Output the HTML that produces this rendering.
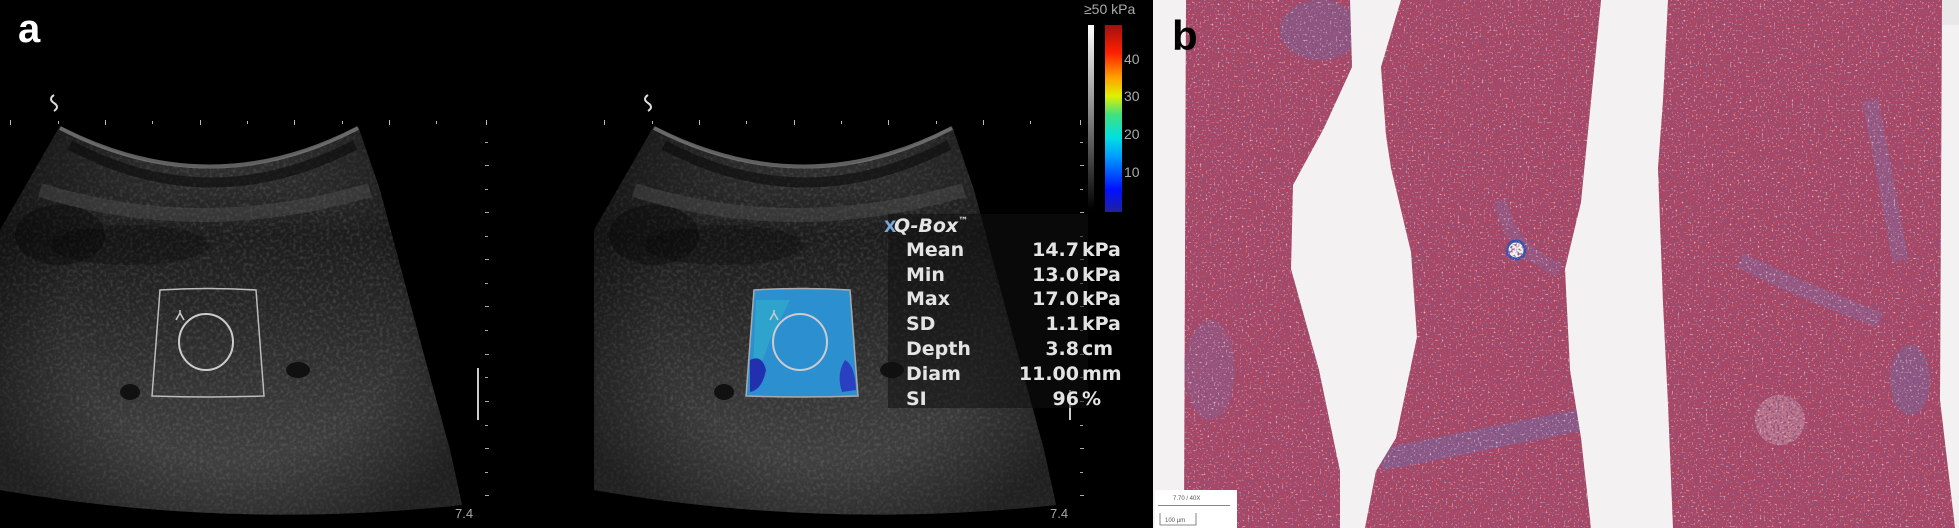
<!DOCTYPE html>
<html><head><meta charset="utf-8"><style>
html,body{margin:0;padding:0;width:1959px;height:528px;overflow:hidden;background:#000}
svg{display:block}
</style></head><body>
<svg width="1959" height="528" viewBox="0 0 1959 528" xmlns="http://www.w3.org/2000/svg">
<defs>
<filter id="noise" x="0" y="0" width="100%" height="100%">
<feTurbulence type="fractalNoise" baseFrequency="0.3" numOctaves="2" seed="5"/>
<feColorMatrix type="matrix" values="0 0 0 0 1  0 0 0 0 1  0 0 0 0 1  0 0 0 1.4 -0.6"/>
</filter>
<filter id="nuclei" x="0" y="0" width="100%" height="100%">
<feTurbulence type="fractalNoise" baseFrequency="0.45" numOctaves="1" seed="9"/>
<feColorMatrix type="matrix" values="0 0 0 0 0.25  0 0 0 0 0.08  0 0 0 0 0.2  0 0 0 4 -1.9"/>
</filter>
<filter id="whites" x="0" y="0" width="100%" height="100%">
<feTurbulence type="fractalNoise" baseFrequency="0.5" numOctaves="1" seed="21"/>
<feColorMatrix type="matrix" values="0 0 0 0 1  0 0 0 0 0.92  0 0 0 0 0.95  0 0 0 4 -2.3"/>
</filter>
<linearGradient id="fanG" x1="0" y1="0" x2="0" y2="1">
<stop offset="0" stop-color="#3a3a3a"/>
<stop offset="0.15" stop-color="#2c2c2c"/>
<stop offset="0.28" stop-color="#1c1c1c"/>
<stop offset="0.45" stop-color="#262626"/>
<stop offset="0.75" stop-color="#3a3a3a"/>
<stop offset="1" stop-color="#444"/>
</linearGradient>
<linearGradient id="cbar" x1="0" y1="1" x2="0" y2="0">
<stop offset="0" stop-color="#2020a0"/>
<stop offset="0.12" stop-color="#0010ff"/>
<stop offset="0.3" stop-color="#00a0ff"/>
<stop offset="0.4" stop-color="#00e0e0"/>
<stop offset="0.52" stop-color="#40e080"/>
<stop offset="0.62" stop-color="#e0f000"/>
<stop offset="0.72" stop-color="#ffa000"/>
<stop offset="0.85" stop-color="#ff2000"/>
<stop offset="1" stop-color="#a01010"/>
</linearGradient>
<linearGradient id="gbar" x1="0" y1="1" x2="0" y2="0">
<stop offset="0" stop-color="#000"/><stop offset="1" stop-color="#fff"/>
</linearGradient>
<radialGradient id="vig" cx="0.5" cy="0.5" r="0.6">
<stop offset="0.6" stop-color="#000" stop-opacity="0"/><stop offset="1" stop-color="#000" stop-opacity="0.5"/>
</radialGradient>
<clipPath id="fanClip"><path d="M60,126 Q210,210 358,126 L380,190 L420,340 L450,450 L462,505 Q230,530 0,490 L0,230 Z"/></clipPath>
<g id="fan">
<path d="M60,126 Q210,210 358,126 L380,190 L420,340 L450,450 L462,505 Q230,530 0,490 L0,230 Z" fill="url(#fanG)"/>
<g clip-path="url(#fanClip)"><rect x="0" y="120" width="470" height="410" filter="url(#noise)" opacity="0.22"/></g>
<path d="M60,126 Q210,210 358,126 L380,190 L420,340 L450,450 L462,505 Q230,530 0,490 L0,230 Z" fill="url(#vig)"/>
<path d="M60,128 Q210,205 358,128" stroke="#888" stroke-width="4" fill="none" opacity="0.7"/>
<path d="M70,145 Q210,220 355,145" stroke="#0a0a0a" stroke-width="10" fill="none" opacity="0.6"/>
<path d="M40,190 Q200,240 370,190" stroke="#666" stroke-width="14" fill="none" opacity="0.3"/>
<ellipse cx="60" cy="235" rx="45" ry="30" fill="#000" opacity="0.3"/>
<ellipse cx="130" cy="245" rx="80" ry="20" fill="#000" opacity="0.25"/>
<ellipse cx="130" cy="392" rx="10" ry="8" fill="#111"/>
<ellipse cx="298" cy="370" rx="12" ry="8" fill="#111"/>
<path d="M54,95 q-6,4 0,8 q6,4 0,8" stroke="#ddd" stroke-width="2" fill="none"/>
</g>
</defs>

<rect x="0" y="0" width="1155" height="528" fill="#000"/>
<use href="#fan"/>
<use href="#fan" x="594"/>
<g fill="#bbb">
<rect x="10" y="120" width="1" height="5"/><rect x="58" y="121" width="1" height="3"/><rect x="105" y="120" width="1" height="5"/><rect x="152" y="121" width="1" height="3"/><rect x="200" y="120" width="1" height="5"/><rect x="247" y="121" width="1" height="3"/><rect x="294" y="120" width="1" height="5"/><rect x="342" y="121" width="1" height="3"/><rect x="389" y="120" width="1" height="5"/><rect x="436" y="121" width="1" height="3"/><rect x="486" y="120" width="1" height="5"/>
<rect x="604" y="120" width="1" height="5"/><rect x="652" y="121" width="1" height="3"/><rect x="699" y="120" width="1" height="5"/><rect x="746" y="121" width="1" height="3"/><rect x="794" y="120" width="1" height="5"/><rect x="841" y="121" width="1" height="3"/><rect x="888" y="120" width="1" height="5"/><rect x="936" y="121" width="1" height="3"/><rect x="983" y="120" width="1" height="5"/><rect x="1030" y="121" width="1" height="3"/><rect x="1080" y="120" width="1" height="5"/>
</g>
<g fill="#aaa">
<rect x="485" y="142" width="3" height="1"/><rect x="485" y="165" width="4" height="1"/><rect x="485" y="189" width="3" height="1"/><rect x="485" y="212" width="4" height="1"/><rect x="485" y="236" width="3" height="1"/><rect x="485" y="259" width="4" height="1"/><rect x="485" y="283" width="3" height="1"/><rect x="485" y="306" width="4" height="1"/><rect x="485" y="330" width="3" height="1"/><rect x="485" y="354" width="4" height="1"/><rect x="485" y="377" width="3" height="1"/><rect x="485" y="401" width="4" height="1"/><rect x="485" y="425" width="3" height="1"/><rect x="485" y="448" width="4" height="1"/><rect x="485" y="472" width="3" height="1"/><rect x="485" y="495" width="4" height="1"/>
<rect x="1080" y="142" width="3" height="1"/><rect x="1080" y="165" width="4" height="1"/><rect x="1080" y="189" width="3" height="1"/><rect x="1080" y="212" width="4" height="1"/><rect x="1080" y="236" width="3" height="1"/><rect x="1080" y="259" width="4" height="1"/><rect x="1080" y="283" width="3" height="1"/><rect x="1080" y="306" width="4" height="1"/><rect x="1080" y="330" width="3" height="1"/><rect x="1080" y="354" width="4" height="1"/><rect x="1080" y="377" width="3" height="1"/><rect x="1080" y="401" width="4" height="1"/><rect x="1080" y="425" width="3" height="1"/><rect x="1080" y="448" width="4" height="1"/><rect x="1080" y="472" width="3" height="1"/><rect x="1080" y="495" width="4" height="1"/>
</g>
<rect x="477" y="368" width="2" height="52" fill="#ccc"/>
<rect x="1069" y="390" width="2" height="30" fill="#ccc"/>
<path d="M160,290 Q208,287 256,290 L264,396 Q208,398 152,396 Z" fill="none" stroke="#bbb" stroke-width="1.5"/>
<ellipse cx="206" cy="342" rx="27" ry="28" fill="none" stroke="#ccc" stroke-width="2"/>
<path d="M176,320 l4,-7 l4,7 M180,313 l0,-3" stroke="#ccc" stroke-width="1.5" fill="none"/>
<path d="M754,290 Q802,287 850,290 L858,396 Q802,398 746,396 Z" fill="#2c8fd0" stroke="#aaa" stroke-width="1.5"/>
<path d="M756,300 L790,300 L770,340 L752,390 Z" fill="#30b0c8" opacity="0.6"/>
<path d="M750,360 q12,-6 16,10 q-4,20 -16,22 Z" fill="#2230b0"/>
<path d="M845,360 q10,5 11,30 l-14,2 q-6,-18 3,-32 Z" fill="#2a40c0"/>
<ellipse cx="800" cy="342" rx="27" ry="28" fill="none" stroke="#ccc" stroke-width="2"/>
<path d="M770,320 l4,-7 l4,7 M774,313 l0,-3" stroke="#ccc" stroke-width="1.5" fill="none"/>
<rect x="888" y="214" width="200" height="194" fill="#111" opacity="0.55"/>
<g font-family="DejaVu Sans, sans-serif" font-weight="bold" fill="#e4e4e4" font-size="19">
<text x="884" y="232" fill="#7aa8d8" font-size="16">X</text>
<text x="894" y="232" font-style="italic">Q-Box<tspan font-size="10" dy="-8">™</tspan></text>
<text x="906" y="256">Mean</text><text x="906" y="281">Min</text><text x="906" y="305">Max</text><text x="906" y="330">SD</text><text x="906" y="355">Depth</text><text x="906" y="380">Diam</text><text x="906" y="405">SI</text>
<g text-anchor="end">
<text x="1079" y="256">14.7</text><text x="1079" y="281">13.0</text><text x="1079" y="305">17.0</text><text x="1079" y="330">1.1</text><text x="1079" y="355">3.8</text><text x="1079" y="380">11.00</text><text x="1079" y="405">96</text>
</g>
<text x="1082" y="256">kPa</text><text x="1082" y="281">kPa</text><text x="1082" y="305">kPa</text><text x="1082" y="330">kPa</text><text x="1082" y="355">cm</text><text x="1082" y="380">mm</text><text x="1082" y="405">%</text>
</g>
<rect x="1088" y="25" width="6" height="185" fill="url(#gbar)"/>
<rect x="1105" y="25" width="17" height="187" fill="url(#cbar)"/>
<g font-family="Liberation Sans, sans-serif" fill="#aaa" font-size="14">
<text x="1084" y="14" font-size="14">≥50 kPa</text>
<text x="1124" y="64">40</text><text x="1124" y="101">30</text><text x="1124" y="139">20</text><text x="1124" y="177">10</text>
<text x="455" y="518" font-size="13">7.4</text><text x="1050" y="518" font-size="13">7.4</text>
</g>
<text x="18" y="42" font-family="Liberation Sans, sans-serif" font-weight="bold" font-size="40" fill="#fff">a</text>

<rect x="1153" y="0" width="806" height="528" fill="#f3f1f1"/>
<clipPath id="tis">
<path d="M1186,0 L1350,0 L1352,67 L1324,128 L1293,185 L1291,269 L1319,370 L1340,471 L1340,528 L1184,528 Z"/>
<path d="M1401,0 L1601,0 L1591,101 L1581,202 L1565,269 L1570,370 L1581,438 L1591,528 L1365,528 L1376,471 L1396,438 L1417,337 L1411,252 L1391,168 L1386,135 L1381,67 Z"/>
<path d="M1668,0 L1942,0 L1940,400 L1955,528 L1673,528 L1668,404 L1663,303 L1658,168 L1663,101 Z"/>
</clipPath>
<g clip-path="url(#tis)">
<rect x="1153" y="0" width="806" height="528" fill="#ac4662"/>
<ellipse cx="1320" cy="30" rx="40" ry="30" fill="#6a6aa8" opacity="0.45"/>
<ellipse cx="1210" cy="370" rx="25" ry="50" fill="#7a70b0" opacity="0.35"/>
<path d="M1380,460 Q1480,440 1580,420" stroke="#6a70b0" stroke-width="22" fill="none" opacity="0.5"/>
<path d="M1500,200 Q1510,250 1560,270" stroke="#7a78b8" stroke-width="14" fill="none" opacity="0.35"/>
<circle cx="1516" cy="250" r="9" fill="#f3f1f1" stroke="#3050b0" stroke-width="3"/>
<path d="M1740,260 Q1800,290 1880,320 M1870,100 Q1890,200 1900,260" stroke="#7a78b8" stroke-width="16" fill="none" opacity="0.4"/>
<ellipse cx="1910" cy="380" rx="20" ry="35" fill="#6a70b0" opacity="0.45"/>
<ellipse cx="1780" cy="420" rx="25" ry="25" fill="#d8b8c8" opacity="0.4"/>
<rect x="1153" y="0" width="806" height="528" filter="url(#whites)" opacity="0.7"/>
<rect x="1153" y="0" width="806" height="528" filter="url(#nuclei)"/>
</g>
<rect x="1942" y="0" width="17" height="25" fill="#e8e8e8"/>
<text x="1172" y="50" font-family="Liberation Sans, sans-serif" font-weight="bold" font-size="42" fill="#000">b</text>
<rect x="1155" y="490" width="82" height="38" fill="#fff"/>
<g font-family="Liberation Sans, sans-serif" font-size="6" fill="#555">
<text x="1173" y="500">7.70 / 40X</text>
<rect x="1158" y="505" width="72" height="1" fill="#888"/>
<text x="1165" y="522">100 µm</text>
<path d="M1160,513 v12 h36 v-12" stroke="#666" fill="none" stroke-width="0.8"/>
</g>
</svg>
</body></html>
